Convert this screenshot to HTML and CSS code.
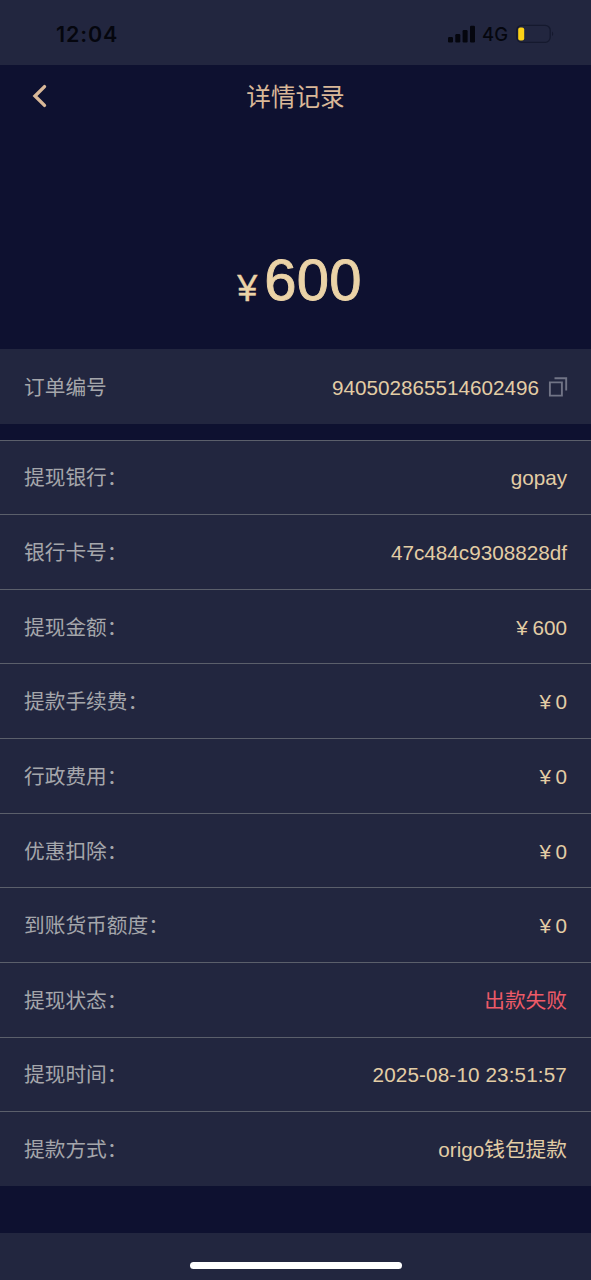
FILE: index.html
```html
<!DOCTYPE html>
<html lang="zh-CN">
<head>
<meta charset="utf-8">
<title>详情记录</title>
<link rel="stylesheet" href="styles.css">
</head>
<body>
<div class="screen">
  <div class="status-bar">
    <span class="clock">12:04</span>
    <div class="status-icons">
      <svg class="signal" width="28" height="18" viewBox="0 0 28 18">
        <rect x="0" y="12" width="5" height="5.5" rx="1.2"/>
        <rect x="7.3" y="9" width="5" height="8.5" rx="1.2"/>
        <rect x="14.6" y="5" width="5" height="12.5" rx="1.2"/>
        <rect x="22" y="0.8" width="5" height="16.7" rx="1.2"/>
      </svg>
      <span class="network">4G</span>
      <svg class="battery" width="38" height="20" viewBox="0 0 38 20">
        <rect x="0.8" y="1.3" width="33.4" height="17" rx="5" fill="none" stroke="#15192e" stroke-width="1.3"/>
        <path d="M36 7.5v4.6c1.6-.8 1.6-3.8 0-4.6z" fill="#15192e"/>
        <rect x="2.2" y="3.4" width="6" height="13" rx="2" fill="#fcd116"/>
      </svg>
    </div>
  </div>
  <header class="nav">
    <svg class="back" width="20" height="26" viewBox="0 0 20 26">
      <path d="M14.5 3.6L5 13l9.5 9.4" fill="none" stroke="#d9b898" stroke-width="3.4" stroke-linecap="round"/>
    </svg>
    <h1 class="title">详情记录</h1>
  </header>
  <div class="amount"><span class="currency">¥</span><span class="number">600</span></div>
  <div class="row order">
    <span class="label">订单编号</span>
    <span class="value">940502865514602496</span>
    <svg class="copy" width="20" height="20" viewBox="0 0 20 20" fill="none" stroke="#717486" stroke-width="1.9">
      <path d="M1.9 5.4h12v13.2h-12z"/>
      <path d="M6.5 1.2h11.7v12.3"/>
    </svg>
  </div>
  <div class="details">
    <div class="row"><span class="label">提现银行：</span><span class="value">gopay</span></div>
    <div class="row"><span class="label">银行卡号：</span><span class="value">47c484c9308828df</span></div>
    <div class="row"><span class="label">提现金额：</span><span class="value"><span class="yen">¥</span>600</span></div>
    <div class="row"><span class="label">提款手续费：</span><span class="value"><span class="yen">¥</span>0</span></div>
    <div class="row"><span class="label">行政费用：</span><span class="value"><span class="yen">¥</span>0</span></div>
    <div class="row"><span class="label">优惠扣除：</span><span class="value"><span class="yen">¥</span>0</span></div>
    <div class="row"><span class="label">到账货币额度：</span><span class="value"><span class="yen">¥</span>0</span></div>
    <div class="row"><span class="label">提现状态：</span><span class="value failed">出款失败</span></div>
    <div class="row"><span class="label">提现时间：</span><span class="value spaced">2025-08-10 23:51:57</span></div>
    <div class="row"><span class="label">提款方式：</span><span class="value">origo钱包提款</span></div>
  </div>
  <footer class="home-area"><div class="home-indicator"></div></footer>
</div>
</body>
</html>
```
FILE: styles.css
```css
* { box-sizing: border-box; }
body {
  margin: 0;
  background: #0e1130;
  font-family: "Liberation Sans", "Noto Sans CJK SC", sans-serif;
}
.screen {
  display: flex;
  flex-direction: column;
  width: 591px;
  height: 1280px;
  overflow: hidden;
}
.status-bar {
  display: flex;
  justify-content: space-between;
  align-items: center;
  height: 65px;
  padding: 2px 37px 0 56px;
  background: #22263f;
  color: #05060e;
}
.clock {
  padding-top: 1px;
  font: 600 21.5px/30px Inter, sans-serif;
  letter-spacing: 0.9px;
}
.status-icons { display: flex; align-items: center; }
.network {
  margin: 0 8px 0 6px;
  padding-top: 1px;
  font: 500 18.5px/30px Inter, sans-serif;
}
.signal { fill: #05060e; }
.nav {
  display: grid;
  grid-template-columns: 60px 1fr 60px;
  align-items: center;
  height: 62px;
}
.back { margin-left: 30px; }
.title {
  margin: 4px 0 0;
  color: #d9b898;
  font-size: 24.6px;
  font-weight: 400;
  line-height: 36px;
  text-align: center;
}
.amount {
  display: flex;
  justify-content: center;
  align-items: baseline;
  height: 222px;
  padding-top: 120px;
  padding-left: 8px;
  color: #ebd3a7;
  line-height: 66px;
}
.currency {
  margin-right: 7px;
  font-size: 36px;
  -webkit-text-stroke: 0.4px;
  transform: translateY(1px);
}
.number {
  font-size: 58px;
  letter-spacing: 0.2px;
  -webkit-text-stroke: 0.9px;
}
.row {
  display: flex;
  align-items: center;
  justify-content: space-between;
  height: 74.65px;
  padding: 2px 24px 0;
  border-top: 1px solid #5b5f6b;
  background: #22263f;
  font-size: 20.7px;
  line-height: 30px;
}
.order {
  height: 75px;
  margin-bottom: 15.5px;
  padding-right: 23px;
  border-top: 0;
}
.label { color: #a5a6ab; }
.value { color: #e3cda5; }
.spaced { letter-spacing: 0.12px; }
.failed { color: #ee5b68; }
.order .value { margin-left: auto; }
.copy { margin: -2px 0 0 9px; }
.yen {
  display: inline-block;
  width: 1em;
  text-align: center;
}
.home-area {
  display: flex;
  justify-content: center;
  height: 47px;
  margin-top: auto;
  padding-top: 29px;
  background: #22263f;
}
.home-indicator {
  width: 212px;
  height: 7px;
  border-radius: 4px;
  background: #fff;
}
```
